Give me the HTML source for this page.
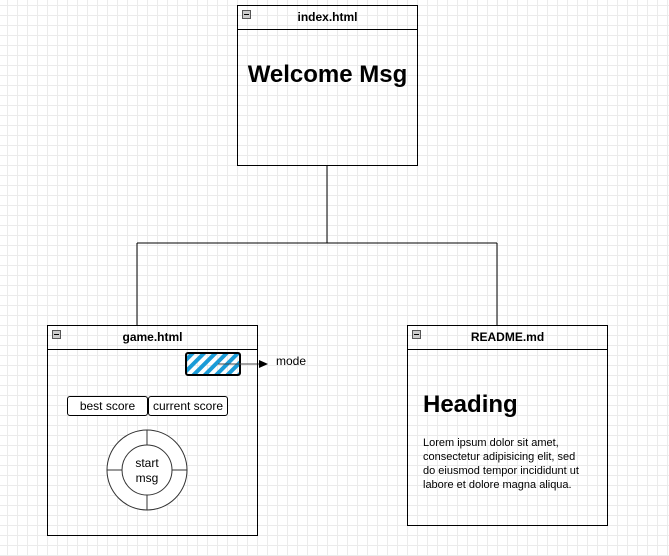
<!DOCTYPE html>
<html><head><style>
html,body{margin:0;padding:0}
body{width:669px;height:556px;position:relative;overflow:hidden;background-color:#fff;
background-image:linear-gradient(#ebebeb 1px,transparent 1px),linear-gradient(90deg,#ebebeb 1px,transparent 1px);
background-size:10px 10px;background-position:7px 5px;font-family:"Liberation Sans",Arial,sans-serif;color:#000}
.box{position:absolute;border:1px solid #000;box-sizing:border-box}
.hd{height:23px;border-bottom:1px solid #000;font-weight:bold;font-size:12px;text-align:center;line-height:23px;position:relative}
.mn{position:absolute;left:4px;top:4px;width:9px;height:9px;border:1px solid #555;background:#ccc;box-sizing:border-box}
.mn:after{content:"";position:absolute;left:1px;right:1px;top:3px;height:1px;background:#000}
.abs{position:absolute}
.btn{position:absolute;border:1px solid #000;border-radius:3px;font-size:12px;text-align:center;line-height:18px;height:20px;box-sizing:border-box;background:#fff}
</style></head><body>
<svg class="abs" style="left:0;top:0" width="669" height="556">
<path d="M327 165V243M137 243H497M137 243V325M497 243V325" stroke="#000" fill="none"/>
<defs><pattern id="st" width="8" height="8" patternUnits="userSpaceOnUse" patternTransform="rotate(45)"><rect width="4" height="8" fill="#1a9bd7"/></pattern></defs>
<rect x="186" y="353" width="54" height="22" rx="2" fill="url(#st)" stroke="#000" stroke-width="2"/>
<path d="M218 364H262" stroke="#444"/><path d="M268 364L259 360V368Z" fill="#000"/>
<circle cx="147" cy="470" r="40" fill="#fff" stroke="#333"/>
<circle cx="147" cy="470" r="25" fill="#fff" stroke="#333"/>
<path d="M147 430V445M147 495V510M107 470H122M172 470H187" stroke="#333"/>
</svg>
<div class="box" style="left:237px;top:5px;width:181px;height:161px"><div class="hd"><span class="mn"></span>index.html</div>
<div style="text-align:center;font-weight:bold;font-size:24px;margin-top:31px">Welcome Msg</div></div>
<div class="box" style="left:47px;top:325px;width:211px;height:211px"><div class="hd"><span class="mn"></span>game.html</div></div>
<div class="abs" style="left:276px;top:354px;font-size:12px">mode</div>
<div class="btn" style="left:67px;top:396px;width:81px">best score</div>
<div class="btn" style="left:148px;top:396px;width:80px">current score</div>
<div class="abs" style="left:122px;top:456px;width:50px;text-align:center;font-size:12px;line-height:15px">start<br>msg</div>
<div class="box" style="left:407px;top:325px;width:201px;height:201px"><div class="hd"><span class="mn"></span>README.md</div>
<div class="abs" style="left:15px;top:65px;font-weight:bold;font-size:24px">Heading</div>
<div class="abs" style="left:15px;top:110px;width:162px;font-size:11px;line-height:14px">Lorem ipsum dolor sit amet, consectetur adipisicing elit, sed do eiusmod tempor incididunt ut labore et dolore magna aliqua.</div></div>
</body></html>
